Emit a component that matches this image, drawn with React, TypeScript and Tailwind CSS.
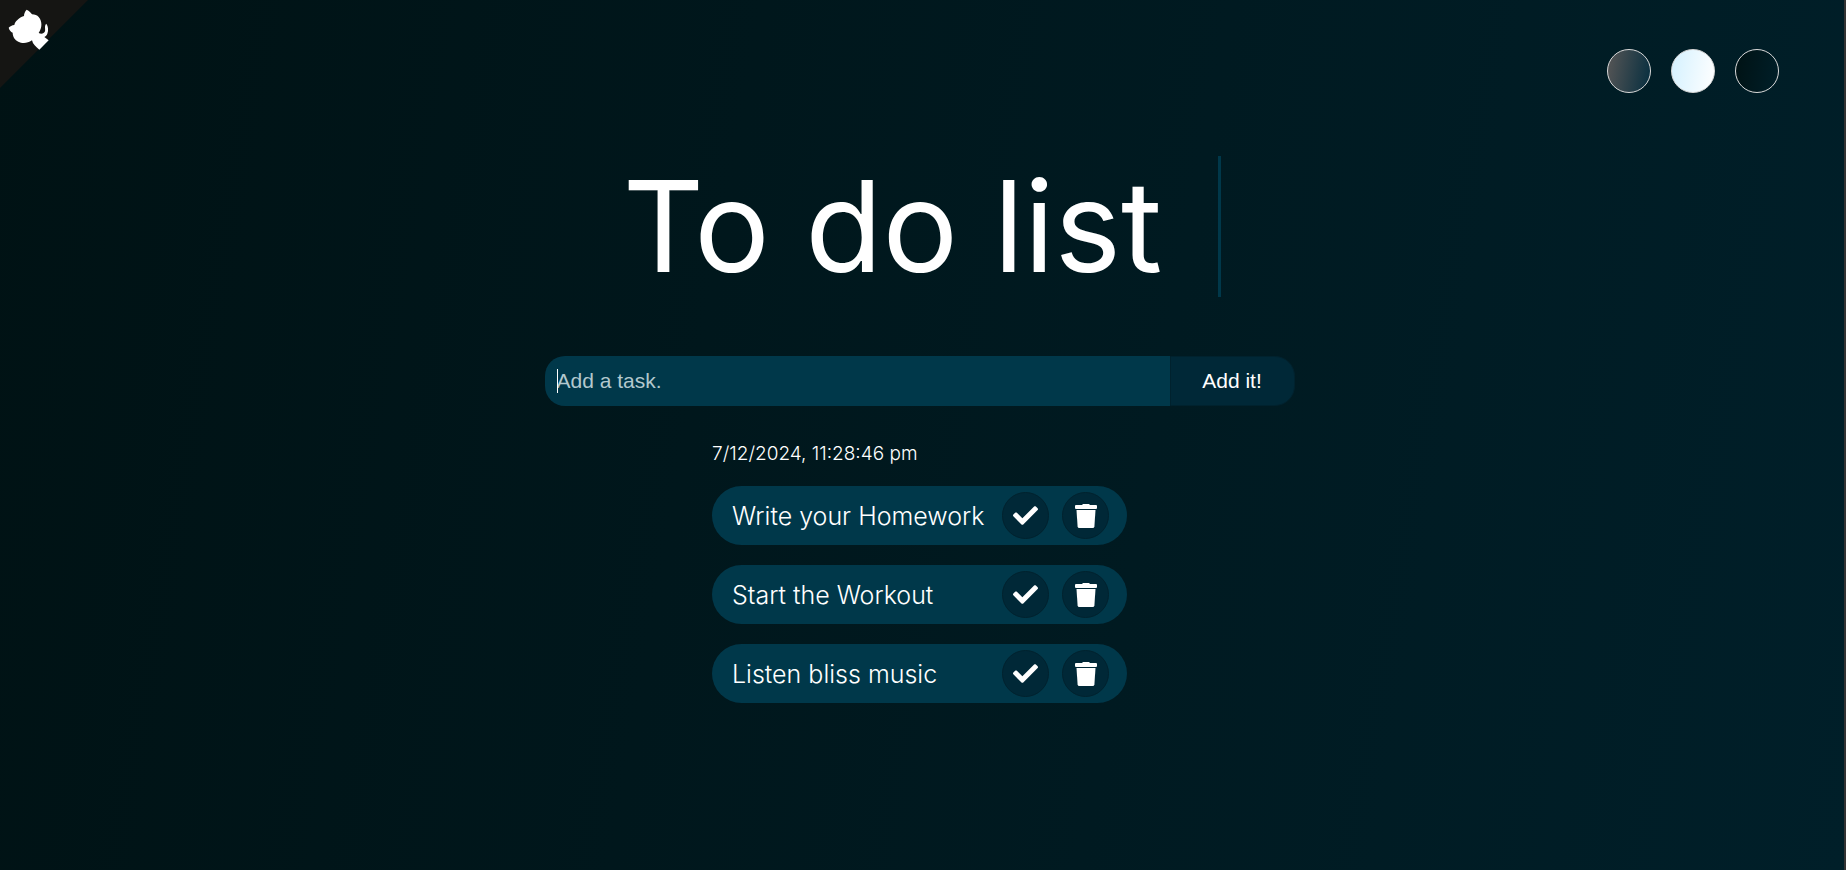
import { useState } from "react";
import type { FormEvent } from "react";
import { FaCheck } from "react-icons/fa";

const themes = [
  { name: "Standard theme", fill: "bg-[linear-gradient(100deg,#575656,#062e3f)]" },
  { name: "Light theme", fill: "bg-[linear-gradient(100deg,#d4f1ff,#ffffff)]" },
  { name: "Darker theme", fill: "bg-[linear-gradient(100deg,#001214,#001f29)]" },
];

function GithubCorner() {
  return (
    <a href="#github" aria-label="View source on GitHub" className="absolute top-0 left-0">
      <svg viewBox="0 0 264 264" className="size-[88px]" aria-hidden="true">
        <path fill="#151513" d="M0,0 L264,0 L0,264 Z" />
        <path
          fill="#fff"
          d="M26,83 C30,79 36,76 43,75 C45,66 54,54 72,48 C72,41 75,34 80,29 C88,33 93,38 96,43 C104,43 112,46 116,51 C126,62 128,82 116,99 C124,103 132,101 135,94 C137,86 132,77 139,71 C145,78 146,92 142,101 C140,106 137,109 133,111 L146,121 L118,149 C108,141 98,132 96,121 C82,131 66,131 55,125 C45,120 38,110 38,98 C32,95 28,90 26,83 Z"
        />
      </svg>
    </a>
  );
}

function TrashIcon() {
  return (
    <svg viewBox="0 0 22 24" className="h-6 w-[22px]" fill="currentColor" aria-hidden="true">
      <path d="M1,1 H7 L8,0 H14 L15,1 H21 Q22,1 22,2 V4 Q22,5 21,5 H1 Q0,5 0,4 V2 Q0,1 1,1 Z" />
      <path d="M1.5,6 H20.5 L19.4,22.4 Q19.2,24 17.6,24 H4.4 Q2.8,24 2.6,22.4 Z" />
    </svg>
  );
}

const roundButton =
  "flex size-[47px] shrink-0 items-center justify-center rounded-full border border-[#00222e] bg-[#002837] text-white";

export default function App() {
  const [tasks, setTasks] = useState(["Write your Homework", "Start the Workout", "Listen bliss music"]);
  const [done, setDone] = useState<string[]>([]);
  const [draft, setDraft] = useState("");

  const addTask = (event: FormEvent) => {
    event.preventDefault();
    const task = draft.trim();
    if (!task) return;
    setTasks([...tasks, task]);
    setDraft("");
  };

  const toggle = (task: string) =>
    setDone(done.includes(task) ? done.filter((t) => t !== task) : [...done, task]);

  return (
    <div className="relative min-h-screen border-r-2 border-[#333333] bg-[linear-gradient(100deg,#001214,#001f29)] font-['Inter',sans-serif] text-white">
      <GithubCorner />
      <header>
        <div className="flex justify-end gap-5 pt-[49px] pr-[65px]">
          {themes.map((theme) => (
            <button
              key={theme.name}
              type="button"
              aria-label={theme.name}
              className={`size-11 rounded-full border border-[#d9d9d9] ${theme.fill}`}
            />
          ))}
        </div>
        <h1 className="mx-auto mt-[63px] w-fit border-r-[3px] border-[#00384a] pr-14 text-[126px] leading-[141px]">
          To do list
        </h1>
      </header>

      <main className="flex flex-col items-center pr-[5px] pb-16">
        <form onSubmit={addTask} className="mt-[59px] flex h-[50px] w-full max-w-[750px] font-['Liberation_Sans',sans-serif] text-[21px]">
          <div className="relative flex-1">
            <input
              type="text"
              aria-label="Task"
              placeholder="Add a task."
              value={draft}
              onChange={(e) => setDraft(e.target.value)}
              className="size-full rounded-l-[20px] bg-[#00384a] px-3 text-white outline-none placeholder:text-[#b3c8ce]"
            />
            <span className="absolute top-[13px] left-3 h-6 w-px bg-white" />
          </div>
          <button type="submit" className="w-[125px] rounded-r-[20px] border border-[#00222e] bg-[#002837]">
            Add it!
          </button>
        </form>

        <section className="mt-9">
          <p className="text-[19px] leading-6 font-light">7/12/2024, 11:28:46 pm</p>
          <ul className="mt-5 flex flex-col gap-5">
            {tasks.map((task) => (
              <li key={task} className="flex h-[59px] min-w-[415px] items-center gap-[13px] rounded-full bg-[#00384a] pr-[18px] pl-5">
                <span className={`flex-1 text-[25px] leading-8 font-light ${done.includes(task) ? "line-through opacity-60" : ""}`}>
                  {task}
                </span>
                <button type="button" aria-label={`Complete ${task}`} onClick={() => toggle(task)} className={roundButton}>
                  <FaCheck className="size-[25px]" />
                </button>
                <button
                  type="button"
                  aria-label={`Delete ${task}`}
                  onClick={() => setTasks(tasks.filter((t) => t !== task))}
                  className={roundButton}
                >
                  <TrashIcon />
                </button>
              </li>
            ))}
          </ul>
        </section>
      </main>
    </div>
  );
}
